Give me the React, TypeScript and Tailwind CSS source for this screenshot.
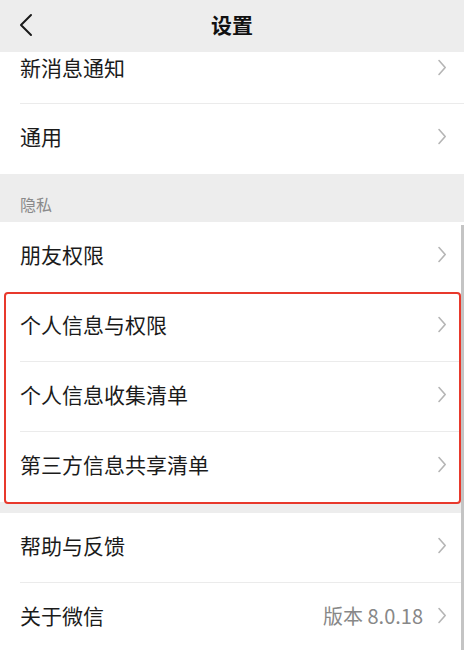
import React from "react";

const font = { fontFamily: '"Noto Sans CJK SC", "Noto Sans", sans-serif' };

function Chevron() {
  return (
    <svg width="10" height="17" viewBox="0 0 10 17" className="shrink-0">
      <path d="M2 1.5 L8.2 8.5 L2 15.5" fill="none" stroke="#b5b5b5" strokeWidth="1.6" strokeLinecap="round" strokeLinejoin="round" />
    </svg>
  );
}

function Row({ label, value, divider = true, className = "" }: { label: string; value?: string; divider?: boolean; className?: string }) {
  return (
    <div className={`relative flex h-[70px] items-center bg-white pb-[5px] pl-[20px] pr-[17px] ${className}`}>
      <span className="flex-1 text-[21px] leading-none text-[#1b1b1b]">{label}</span>
      {value && <span className="mr-[14px] text-[20px] leading-none text-[#888888]">{value}</span>}
      <Chevron />
      {divider && <div className="absolute bottom-0 left-[20px] right-0 h-px bg-[#ebebeb]" />}
    </div>
  );
}

export default function App() {
  return (
    <div className="relative h-[650px] w-[464px] overflow-hidden bg-[#ededed]" style={font}>
      <div className="relative flex h-[52px] items-center justify-center bg-[#ededed] pb-[4px]">
        <svg width="16" height="24" viewBox="0 0 16 24" className="absolute left-[18px] top-[13px]">
          <path d="M13 2 L3 12 L13 22" fill="none" stroke="#1a1a1a" strokeWidth="2" strokeLinecap="round" strokeLinejoin="round" />
        </svg>
        <span className="text-[21px] font-bold leading-none text-[#111111]">设置</span>
      </div>
      <div className="relative flex h-[52px] items-center bg-white pb-[21px] pl-[20px] pr-[17px]">
        <span className="flex-1 text-[21px] leading-none text-[#1b1b1b]">新消息通知</span>
        <Chevron />
        <div className="absolute bottom-0 left-[20px] right-0 h-px bg-[#ebebeb]" />
      </div>
      <Row label="通用" divider={false} />
      <div className="flex h-[48px] items-end pb-[10px] pl-[20px] text-[16px] leading-none text-[#8a8a8a]">隐私</div>
      <Row label="朋友权限" divider={false} />
      <div className="relative">
        <Row label="个人信息与权限" />
        <Row label="个人信息收集清单" />
        <Row label="第三方信息共享清单" divider={false} />
        <div className="pointer-events-none absolute bottom-[-2px] left-[4px] right-[3px] top-0 rounded-[4px] border-2 border-[#e8392c]" />
      </div>
      <div className="h-[11px]" />
      <Row label="帮助与反馈" />
      <Row label="关于微信" value="版本 8.0.18" divider={false} />
      <div className="absolute right-0 top-[225px] h-[425px] w-[3px] bg-[#c4c4c4]" />
    </div>
  );
}
